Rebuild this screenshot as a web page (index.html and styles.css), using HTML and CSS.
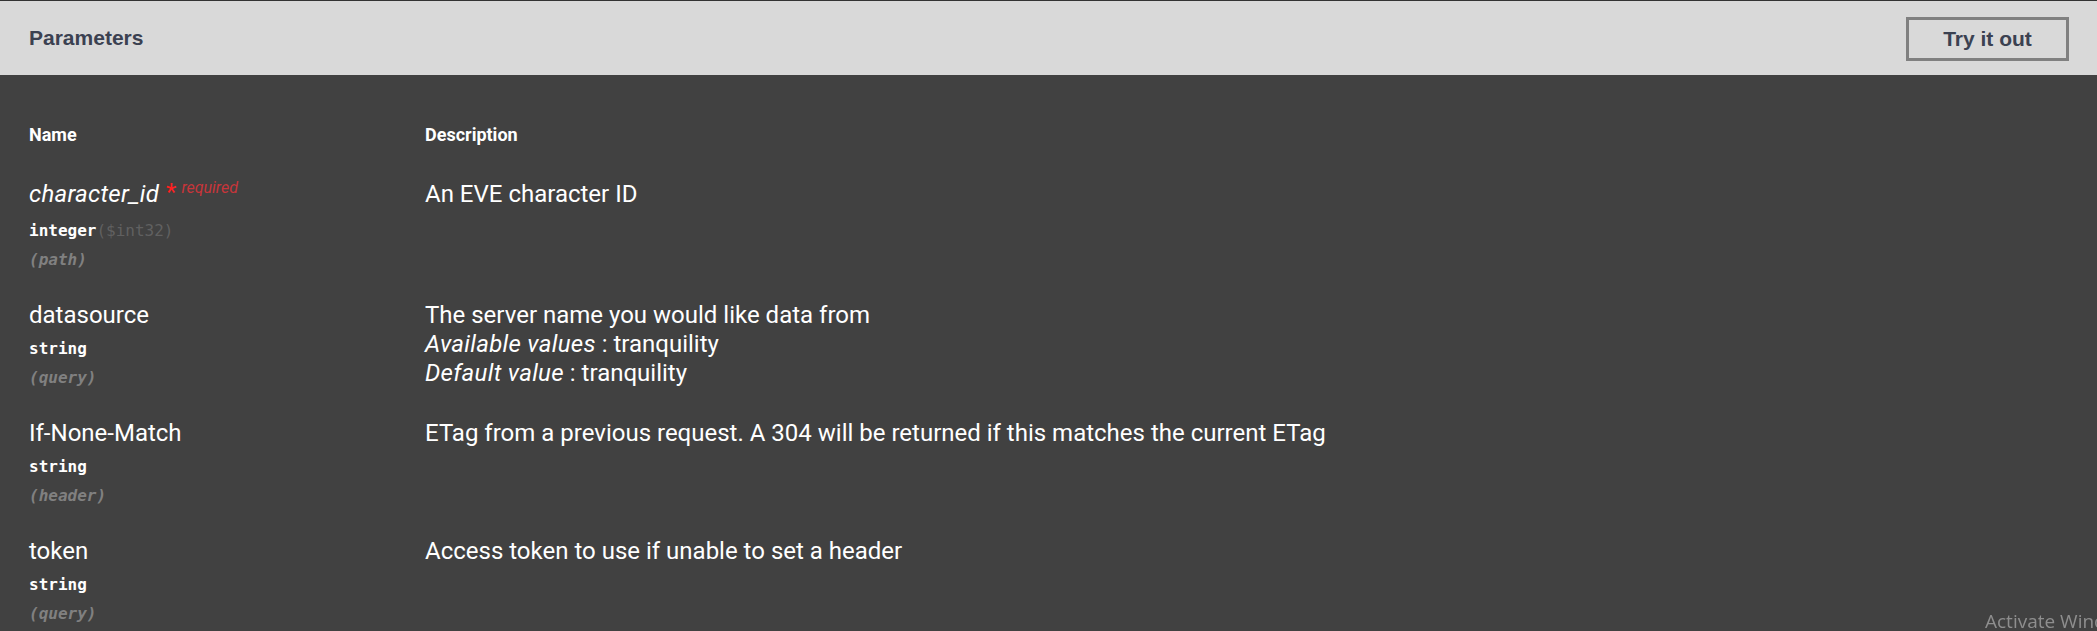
FILE: index.html
```html
<!DOCTYPE html>
<html>
<head>
<meta charset="utf-8">
<link rel="stylesheet" href="styles.css">
</head>
<body>
<div class="section">
  <div class="section-header">
    <h4 class="title">Parameters</h4>
    <button class="try-out">Try it out</button>
  </div>
  <div class="table-container">
    <table class="params">
      <thead>
        <tr>
          <th class="col-name">Name</th>
          <th class="col-desc">Description</th>
        </tr>
      </thead>
      <tbody>
        <tr>
          <td class="col-name">
            <div class="p-name required"><span class="p-name-text">character_id</span><span class="star">&nbsp;*</span><span class="req">required</span></div>
            <div class="p-type">integer<span class="p-format">($int32)</span></div>
            <div class="p-in">(path)</div>
          </td>
          <td class="col-desc"><p>An EVE character ID</p></td>
        </tr>
        <tr>
          <td class="col-name">
            <div class="p-name">datasource</div>
            <div class="p-type">string</div>
            <div class="p-in">(query)</div>
          </td>
          <td class="col-desc">
            <p>The server name you would like data from</p>
            <p><i>Available values</i> : tranquility</p>
            <p><i>Default value</i> : tranquility</p>
          </td>
        </tr>
        <tr>
          <td class="col-name">
            <div class="p-name">If-None-Match</div>
            <div class="p-type">string</div>
            <div class="p-in">(header)</div>
          </td>
          <td class="col-desc"><p>ETag from a previous request. A 304 will be returned if this matches the current ETag</p></td>
        </tr>
        <tr>
          <td class="col-name">
            <div class="p-name">token</div>
            <div class="p-type">string</div>
            <div class="p-in">(query)</div>
          </td>
          <td class="col-desc"><p>Access token to use if unable to set a header</p></td>
        </tr>
      </tbody>
    </table>
  </div>
</div>
<div class="watermark">Activate Windows</div>
</body>
</html>
```

FILE: styles.css
```css
html, body {
  margin: 0;
  padding: 0;
  background: #414141;
  overflow: hidden;
}
body {
  font-family: Roboto, "Liberation Sans", sans-serif;
  color: #ffffff;
  height: 631px;
  border-top: 1px solid #333333;
  box-sizing: border-box;
}
.section-header {
  display: flex;
  align-items: center;
  justify-content: space-between;
  background: #d9d9d9;
  height: 74px;
  padding: 0 29px;
  box-sizing: border-box;
}
.title {
  margin: 0;
  font-family: "Liberation Sans", Arial, sans-serif;
  font-weight: bold;
  font-size: 21px;
  color: #3b4151;
}
.try-out {
  font-family: "Liberation Sans", Arial, sans-serif;
  font-weight: bold;
  font-size: 21px;
  color: #3b4151;
  background: transparent;
  border: 3px solid #808080;
  width: 163px;
  height: 44px;
  margin-right: -1px;
  margin-top: 2px;
  padding: 0;
}
.table-container {
  padding: 29px 29px 0 29px;
}
.params {
  border-collapse: collapse;
  width: 100%;
}
.params th {
  text-align: left;
  font-size: 18px;
  font-weight: 700;
  padding: 20px 0 20px 0;
  line-height: 21px;
  vertical-align: top;
}
.params td {
  vertical-align: top;
  padding: 15px 0 16px 0;
}
.col-name {
  width: 396px;
}
.p-name {
  font-size: 24px;
  line-height: 28px;
  white-space: nowrap;
}
.p-name.required .p-name-text {
  font-style: italic;
  letter-spacing: 0.25px;
}
.star {
  color: #ff2020;
  font-size: 24px;
  position: relative;
  top: -2px;
  padding-left: 1px;
}
.req {
  color: #c8353a;
  font-style: italic;
  font-size: 16px;
  padding-left: 5px;
  position: relative;
  top: -9px;
}
.p-type {
  font-family: "DejaVu Sans Mono", "Liberation Mono", monospace;
  font-weight: bold;
  font-size: 16px;
  line-height: 21px;
  padding: 9px 0 8px 0;
}
.p-format {
  color: #606060;
  font-weight: normal;
}
.p-in {
  font-family: "DejaVu Sans Mono", "Liberation Mono", monospace;
  font-style: italic;
  font-weight: bold;
  font-size: 16px;
  line-height: 21px;
  color: #808080;
}
.col-desc p {
  margin: 0;
  font-size: 24px;
  line-height: 29px;
}
.col-desc i {
  letter-spacing: 0.3px;
}
.watermark {
  position: fixed;
  left: 1985px;
  top: 608px;
  font-family: "Open Sans", "Noto Sans", sans-serif;
  font-size: 19px;
  color: #8e8e8e;
  white-space: nowrap;
}
```
